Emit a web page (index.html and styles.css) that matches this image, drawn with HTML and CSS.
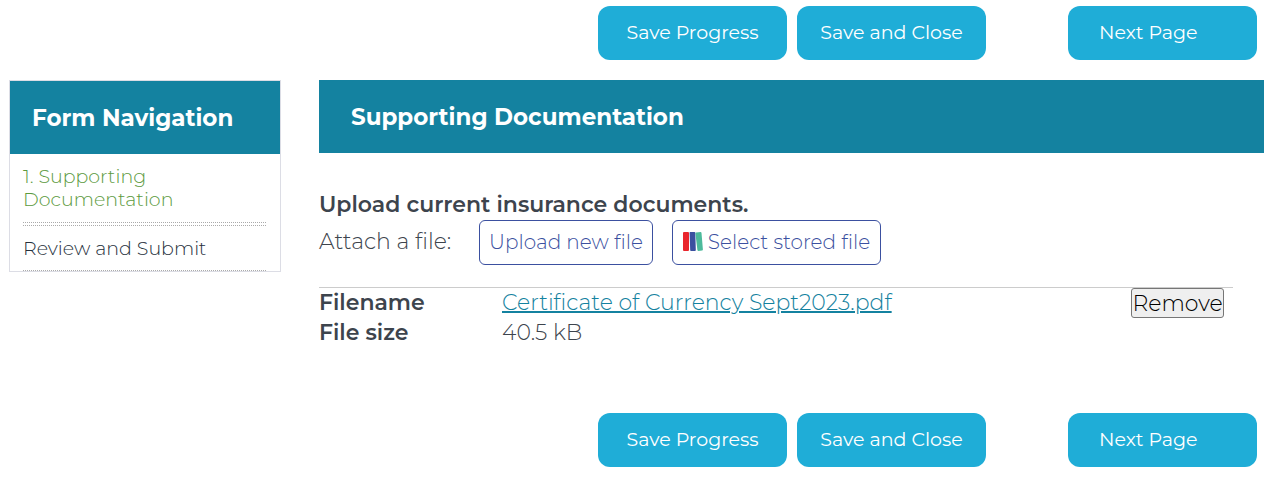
FILE: index.html
```
<!DOCTYPE html>
<html lang="en">
<head>
    <meta charset="UTF-8">
    <meta name="viewport" content="width=device-width, initial-scale=1.0">
    <title>Supporting Documentation</title>
    <link rel="stylesheet" href="styles.css">
</head>
<body>
    <form>
        <div class="actions">
            <button type="button" class="action">Save Progress</button>
            <button type="button" class="action">Save and Close</button>
            <button type="button" class="action next">Next Page</button>
        </div>
        <div class="content">
            <nav class="form-nav">
                <h2>Form Navigation</h2>
                <ul>
                    <li><a href="#" class="current">1. Supporting Documentation</a></li>
                    <li><a href="#">Review and Submit</a></li>
                </ul>
            </nav>
            <main>
                <h1>Supporting Documentation</h1>
                <section class="upload">
                    <h3>Upload current insurance documents.</h3>
                    <div class="attach">
                        <span class="attach-label">Attach a file:</span>
                        <button type="button" class="file-button">Upload new file</button>
                        <button type="button" class="file-button">
                            <svg class="books" viewBox="0 0 20 20" aria-hidden="true">
                                <rect x="0" y="0" width="6" height="19" rx="1" fill="#e9262d"/>
                                <path d="M7 0h4.500q.8 0 .8.800l.5 17.200q0 1-.8 1h-4q-.8 0-.8-.800l-.6-17.200q0-1 .4-1z" fill="#3b50a0"/>
                                <path d="M13 .500l4.600-.400q.8 0 .9.800l1.400 16.700q0 .8-.8.900l-3.700.400q-.9.100-1-.800l-2-16.600q0-.9.600-1z" fill="#4dba9b"/>
                            </svg>
                            Select stored file
                        </button>
                    </div>
                    <table class="files">
                        <tr>
                            <th scope="row">Filename</th>
                            <td><a href="#">Certificate of Currency Sept2023.pdf</a></td>
                            <td class="remove-cell"><button type="button" class="remove-button">Remove</button></td>
                        </tr>
                        <tr>
                            <th scope="row">File size</th>
                            <td colspan="2">40.5 kB</td>
                        </tr>
                    </table>
                </section>
            </main>
        </div>
        <div class="actions">
            <button type="button" class="action">Save Progress</button>
            <button type="button" class="action">Save and Close</button>
            <button type="button" class="action next">Next Page</button>
        </div>
    </form>
</body>
</html>
```
FILE: styles.css
```
* {
    box-sizing: border-box;
}
body {
    margin: 0;
    padding: 6px 12px 10px 9px;
    background-color: white;
    color: #3d444d;
    font-family: Montserrat, Inter, sans-serif;
    font-size: 22px;
    font-weight: 300;
    line-height: 30px;
}
button {
    font-family: inherit;
    font-weight: inherit;
    cursor: pointer;
}
h1, h2, h3 {
    margin: 0;
    font-weight: 700;
}

/* Button rows above and below the form */
.actions {
    display: flex;
    justify-content: flex-end;
    gap: 10px;
    padding-right: 7px;
}
.action {
    width: 189px;
    height: 54px;
    padding: 0 0 2px;
    border: none;
    border-radius: 12px;
    background-color: #1fadd7;
    color: white;
    font-size: 19px;
    font-weight: 400;
}
.next {
    margin-left: 72px;
    padding-left: 31px;
    text-align: left;
}

.content {
    display: flex;
    align-items: flex-start;
    gap: 38px;
    margin: 20px 0 65px;
}
h1, h2 {
    padding-top: 2px;
    background-color: #1482a0;
    color: white;
    font-size: 23px;
    line-height: 71px;
}
h1 {
    padding-left: 32px;
}
h2 {
    padding-left: 22px;
}

/* Left menu */
.form-nav {
    flex: 0 0 272px;
    border: 1px solid #dcdde5;
}
.form-nav ul {
    display: flex;
    flex-direction: column;
    gap: 2px;
    margin: 0 14px 0 13px;
    padding: 0;
    list-style: none;
}
.form-nav li {
    padding: 11px 60px 11px 0;
    border-bottom: 1px dotted #aaa;
    line-height: 23px;
    font-size: 19px;
}
.form-nav li + li {
    padding: 11px 0 10px;
    border-top: 1px dotted #aaa;
}
.form-nav a {
    color: #26303c;
    text-decoration: none;
}
.form-nav .current {
    color: #5c9a3e;
}

main {
    flex: 1;
}
.upload {
    padding: 37px 31px 0 0;
}
h3 {
    font-size: 22px;
    font-weight: 600;
}
.attach {
    display: flex;
    align-items: center;
    margin-bottom: 22px;
}
.attach-label {
    width: 160px;
    padding-bottom: 2px;
}
.file-button {
    display: flex;
    align-items: center;
    justify-content: center;
    gap: 5px;
    width: 174px;
    height: 45px;
    padding: 0 0 1px;
    border: 1px solid #3b50a0;
    border-radius: 6px;
    background-color: white;
    color: #3b50a0;
    font-size: 20px;
}
.file-button + .file-button {
    width: 209px;
    margin-left: 19px;
}
.books {
    width: 20px;
    height: 20px;
}

.files {
    width: 100%;
    border-collapse: collapse;
    border-top: 1px solid #ccc;
}
.files th, .files td {
    padding: 0;
    text-align: left;
    vertical-align: top;
}
.files th {
    width: 183px;
    font-weight: 600;
}
.files a {
    color: #1482a0;
    text-decoration-thickness: 2px;
}
.files .remove-cell {
    text-align: right;
    padding-right: 9px;
}
.remove-button {
    display: block;
    width: 93px;
    height: 30px;
    margin-left: auto;
    padding: 0;
    border: 1px solid #767676;
    border-radius: 3px;
    background-color: #efefef;
    color: black;
    font-size: 22px;
}
```
